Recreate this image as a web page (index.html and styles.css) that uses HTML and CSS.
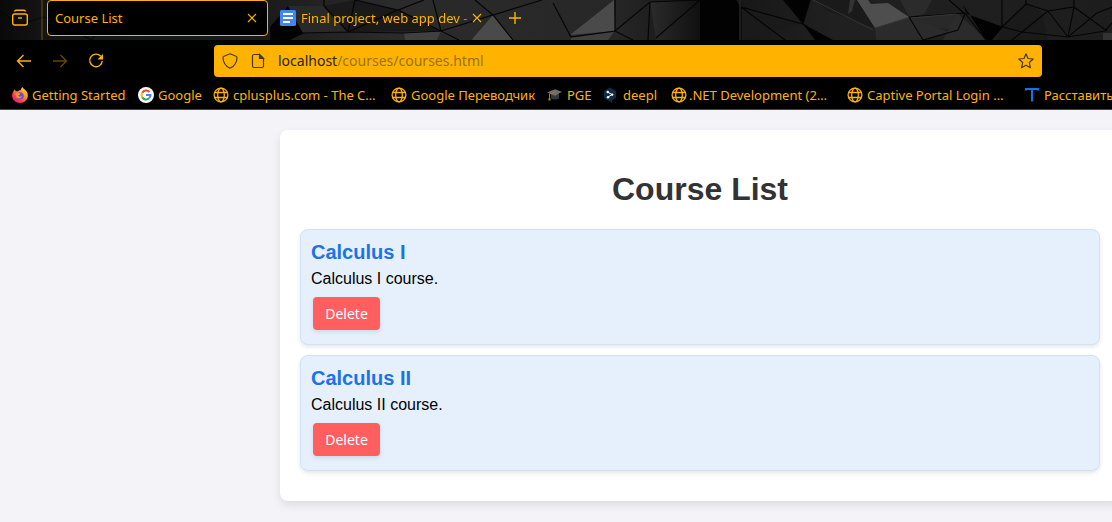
FILE: index.html
```html
<!DOCTYPE html>
<html lang="en">
<head>
<meta charset="utf-8">
<title>Course List</title>
<link rel="stylesheet" href="styles.css">
</head>
<body>
<svg class="symbols" aria-hidden="true">
  <symbol id="globe" viewBox="0 0 16 16"><g fill="none" stroke="currentColor" stroke-width="1.3"><circle cx="8" cy="8" r="6.9"/><ellipse cx="8" cy="8" rx="3.3" ry="6.9"/><path d="M1.5 5.5h13M1.5 10.5h13"/></g></symbol>
  <symbol id="cross" viewBox="0 0 10 10"><path d="M1 1l8 8M9 1l-8 8" stroke="currentColor" stroke-width="1.1" fill="none"/></symbol>
</svg>
<header class="browser">
  <div class="tabs">
    <svg class="texture" viewBox="0 0 1112 40" preserveAspectRatio="xMinYMin slice" aria-hidden="true">
      <defs>
        <linearGradient id="base"><stop offset="0" stop-color="#090909"/><stop offset=".04" stop-color="#151515"/><stop offset=".24" stop-color="#1b1b1b"/><stop offset=".35" stop-color="#2b2b2b"/><stop offset=".55" stop-color="#272727"/><stop offset=".63" stop-color="#141414"/><stop offset=".75" stop-color="#202020"/><stop offset="1" stop-color="#1d1d1d"/></linearGradient>
        <linearGradient id="fade"><stop offset="0" stop-color="#2b2b2b"/><stop offset="1" stop-color="#101010"/></linearGradient>
      </defs>
      <path fill="url(#base)" d="M0 0h1112v40H0z"/>
      <path fill="#020202" d="M270 27l18-21 16 27-14 7h-20zM700 0h36l5 7v33h-41zM783 0h27l-7 24zM803 24l30 16h-18zM963 5l4 9 36 13-11 13h-6l-16-25z"/>
      <path fill="#292929" d="M288 6l36 0 24 26-45 1zM355 0l43 10-49 22zM433 0h42l18 15-52 16zM545 0h24l-15 2 17 35zM493 15l50 25h-30zM912 17l48-4-9 16-42-2z"/>
      <path fill="#1a1a1a" d="M324 6l31-6 43 10-49 22zM398 10l43 21-92 1zM741 7l62 17-62 16zM815 0h42l18 28-50-18zM1003 27l23-24 16 10 6 27h-50z"/>
      <path fill="#2b2b2b" d="M875 28l34-11 40 15-27 8h-46zM909 17l-9-17h32l-8 14zM957 13l-14 27h44z"/>
      <path fill="url(#fade)" d="M650 2l50-2v40h-44z"/>
      <path fill="#4a4a4a" d="M473 38l20-23 20 25h-41zM570 35l44-35 1 31z"/>
      <path fill="#404040" d="M404 33l37-2-4 9h-32zM571 37l43-5-6 8h-37z"/>
      <path fill="#4e4e4e" d="M857 0l11 0 3 4 17-1 21 14-34 11z"/>
      <path fill="#333" d="M850 0h5l-3 11-4 3zM1103 33h9v7h-9z"/>
      <path fill="none" stroke="#060606" stroke-width="1.2" d="M270 40l33-7 45-1 56 1 37-2 52-16 20 25M324 0v6l24 26 50-22 43 21M348 32l7-32 43 10 26-10M441 31l-8-31M441 31l18 9M475 0l18 15 49-15M553 3l18 34 44-6 35-29 50-2M615 31V0M615 31l18 9M650 2l-2 38M700 0l-44 38M740 0l1 7 62 17 7-24M741 7l44 33M741 7v33M803 24l25 16M786 0l17 24M909 17l14 23 35-10 7-16-16-14M909 17l56-4 21 27M1002 0v27l24-23 22 7 26-4 33 24M1026 4v-4M1048 11l-26 21M1048 11l20 26 29-24 15-6M1068 37l6-30V0M1022 32l46 5 37-6 7-8M1003 27l19 5-10 8"/>
      <path fill="none" stroke="#353535" stroke-width="1" d="M875 28l34-10M813 0l60 30M740 0v40M911 18l45-4M42 0v40"/>
      <path fill="none" stroke="#070707" d="M0 10l18 15 26-8 48 23M92 40l24-40 29 31 36-31"/>
      <path d="M42 0v40" stroke="#5b4108"/>
    </svg>
    <button class="icon-button collections" aria-label="Recent browsing"><svg width="18" height="18" viewBox="0 0 18 18" fill="none" stroke="currentColor" stroke-width="1.4"><path d="M3.5 2.500q.3-1.300 1.500-1.300h8q1.200 0 1.500 1.300"/><rect x="1.700" y="5" width="14.600" height="11" rx="2"/><path d="M7 9h4"/></svg></button>
    <div class="tab tab-active"><span class="tab-title">Course List</span><button class="icon-button" aria-label="Close Course List"><svg width="10" height="10"><use href="#cross"/></svg></button></div>
    <div class="tab tab-second"><svg width="16" height="16" viewBox="0 0 16 16"><rect width="16" height="16" rx="1.500" fill="#4285f4"/><path d="M3 4h10M3 8h10M3 12h7" stroke="#fff" stroke-width="1.800"/></svg><span class="tab-title">Final project, web app dev -</span><button class="icon-button" aria-label="Close Final project"><svg width="10" height="10"><use href="#cross"/></svg></button></div>
    <button class="icon-button new-tab" aria-label="New tab"><svg width="12" height="12" viewBox="0 0 12 12"><path d="M6 0v12M0 6h12" stroke="currentColor" stroke-width="1.400"/></svg></button>
  </div>
  <nav class="toolbar" aria-label="Navigation">
    <div class="nav-buttons">
      <button class="icon-button" aria-label="Back"><svg width="16" height="16" viewBox="0 0 16 16" fill="none" stroke="currentColor" stroke-width="1.400"><path d="M15 8H2M7.500 2L1.500 8l6 6"/></svg></button>
      <button class="icon-button dim" aria-label="Forward"><svg width="16" height="16" viewBox="0 0 16 16" fill="none" stroke="currentColor" stroke-width="1.400"><path d="M1 8h13M8.500 2l6 6-6 6"/></svg></button>
      <button class="icon-button" aria-label="Reload"><svg width="16" height="16" viewBox="0 0 16 16" fill="none" stroke="currentColor" stroke-width="1.400"><path d="M12.800 3.300A6.300 6.300 0 1 0 14.300 8"/><path d="M15 1v5.500H9.500z" fill="currentColor" stroke="none"/></svg></button>
    </div>
    <div class="address">
      <svg width="16" height="16" viewBox="0 0 16 16" fill="none" stroke="currentColor" stroke-width="1.200"><path d="M8 .8l6 2.400c.8.300 1 .8 1 1.500-.2 5-3 8.700-7 10.500-4-1.800-6.800-5.500-7-10.500 0-.7.200-1.200 1-1.500z"/></svg>
      <svg width="16" height="16" viewBox="0 0 16 16" fill="none" stroke="currentColor" stroke-width="1.200"><path d="M4 1.500h5.500l4 4v7.500q0 1.500-1.500 1.500H4q-1.500 0-1.500-1.500V3q0-1.500 1.500-1.500z"/><path d="M9.500 1.500v4h4z" fill="currentColor"/></svg>
      <a class="url" href="#courses"><span class="host">localhost</span>/courses/courses.html</a>
      <button class="icon-button star" aria-label="Bookmark this page"><svg width="16" height="16" viewBox="0 0 16 16" fill="none" stroke="currentColor" stroke-width="1.200" stroke-linejoin="round"><path d="M8 .8l2 4.700 5.200.5-3.900 3.500 1.100 5.200L8 12.200l-4.400 2.500 1.100-5.200L.8 6 6 5.500z"/></svg></button>
    </div>
  </nav>
  <nav class="bookmarks" aria-label="Bookmarks">
    <a class="bookmark getting" href="#"><svg width="16" height="16" viewBox="0 0 16 16"><defs><linearGradient id="fox" x1="1" y1="0" x2=".2" y2="1"><stop offset="0" stop-color="#fff04a"/><stop offset=".4" stop-color="#ff9a22"/><stop offset=".75" stop-color="#ff3b47"/><stop offset="1" stop-color="#e31587"/></linearGradient></defs><path d="M2.300 2.200L4 4.200 6 4.300C7 3 8 3.200 8.500 3.500 8.800 2 10 .4 10.700 0c.2 2 3 2.600 4.300 5 2.600 5.400-1.200 11-7 11C1.500 16-1 10 .6 6c.5-1.500 1.300-2 1.700-3.800z" fill="url(#fox)"/><circle cx="8.200" cy="8.800" r="3.500" fill="#7542e5"/><path d="M3.500 6.500c2-1 3 0 5-.2-.2 1.500-2.500 1.500-2 2.500.6 1.500 2.500 1 3.500.2-.3 2.500-4.500 3.500-6 .5z" fill="#ff9427"/></svg>Getting Started</a>
    <a class="bookmark google" href="#"><svg width="16" height="16" viewBox="0 0 16 16" fill="none"><circle cx="8" cy="8" r="8" fill="#fff"/><g stroke-width="2"><path d="M11.400 5A4.500 4.500 0 0 0 4.200 5.700" stroke="#ea4335"/><path d="M4.200 5.700a4.500 4.500 0 0 0 0 4.700" stroke="#fbbc05"/><path d="M4.200 10.400a4.500 4.500 0 0 0 6.900.9" stroke="#34a853"/><path d="M11.100 11.300A4.500 4.500 0 0 0 12.500 8H8" stroke="#4285f4"/></g></svg>Google</a>
    <a class="bookmark cplus" href="#"><svg width="16" height="16"><use href="#globe"/></svg>cplusplus.com - The C…</a>
    <a class="bookmark translate" href="#"><svg width="16" height="16"><use href="#globe"/></svg>Google Переводчик</a>
    <a class="bookmark pge" href="#"><svg width="16" height="16" viewBox="0 0 16 16"><path d="M4 7v4.500q4 2 8 0V7z" fill="#35383a"/><path d="M0 5.500L8 2.300l7 2.500-7 4z" fill="#6b6d6e"/><path d="M8 5L2.500 6.800V12" fill="none" stroke="#a97a22"/><path d="M1.700 11h1.600l.4 2.500H1.400z" fill="#b7841d"/></svg>PGE</a>
    <a class="bookmark deepl" href="#"><svg width="16" height="16" viewBox="0 0 16 16"><path d="M7 .5l6 3.500v7l-4 2.300V16l-3-2-5-3V4z" fill="#0f2b46"/><path d="M4.500 5L9 7.600 5 10" fill="none" stroke="#fff"/><g fill="#fff"><circle cx="4.700" cy="5" r="1.200"/><circle cx="9.200" cy="7.600" r="1.200"/><circle cx="5" cy="10.200" r="1.200"/></g></svg>deepl</a>
    <a class="bookmark net" href="#"><svg width="16" height="16"><use href="#globe"/></svg>.NET Development (2…</a>
    <a class="bookmark captive" href="#"><svg width="16" height="16"><use href="#globe"/></svg>Captive Portal Login …</a>
    <a class="bookmark commas" href="#"><svg width="16" height="16" viewBox="0 0 16 16"><path d="M2 3.500V2h12v1.500M8 2v12.500" fill="none" stroke="#0877ee" stroke-width="2"/></svg>Расставить</a>
  </nav>
</header>
<main class="page">
  <section class="container" id="courses">
    <h1>Course List</h1>
    <article class="course"><h2>Calculus I</h2><p>Calculus I course.</p><button class="delete">Delete</button></article>
    <article class="course"><h2>Calculus II</h2><p>Calculus II course.</p><button class="delete">Delete</button></article>
  </section>
</main>
</body>
</html>
```
FILE: styles.css
```css
* { box-sizing: border-box; }
body { margin: 0; min-height: 100vh; background: #f4f3f8; font-family: "Liberation Sans", Arial, sans-serif; overflow-x: hidden; }
svg { display: block; flex-shrink: 0; }
.symbols { position: absolute; width: 0; height: 0; }
.browser { background: #000; color: #ffb300; font: 13px/20px "Noto Sans", sans-serif; border-bottom: 1px solid #454545; overflow: hidden; }
.icon-button { display: flex; padding: 0; border: 0; background: none; color: inherit; }
.tabs { position: relative; display: flex; align-items: center; height: 40px; padding: 0 0 4px 11px; }
.texture { position: absolute; inset: 0; width: 100%; height: 100%; }
.tabs > :not(.texture) { position: relative; }
.tabs > .texture { position: absolute; }
.tab { display: flex; align-items: center; height: 36px; }
.tab-active { width: 221px; margin-left: 18px; padding: 0 10px 0 7px; background: #000; border: 1px solid #ffb300; border-radius: 4px; }
.tab-title { flex: 1; min-width: 0; white-space: nowrap; overflow: hidden; }
.tab-second { width: 202px; margin-left: 12px; gap: 5px; }
.tab-second .tab-title { margin-right: -4px; mask-image: linear-gradient(to right, #000 92%, rgba(0, 0, 0, .4)); }
.new-tab { margin-left: 27px; }
.toolbar { display: flex; align-items: center; height: 42px; padding: 0 70px 0 16px; }
.nav-buttons { display: flex; gap: 20px; width: 198px; }
.dim { opacity: .4; }
.address { flex: 1; display: flex; align-items: center; gap: 12px; height: 32px; padding: 0 8px; border-radius: 4px; background: #ffb300; color: #473a1c; }
.url { flex: 1; color: #9b7116; font-size: 14px; text-decoration: none; }
.host { color: #252525; }
.bookmarks { display: flex; align-items: center; height: 27px; padding: 0 0 2px 12px; }
.bookmark { display: flex; flex: none; align-items: center; gap: 4px; color: inherit; text-decoration: none; white-space: nowrap; }
.getting { width: 126px; }
.google { width: 75px; }
.cplus { width: 178px; }
.translate { width: 156px; }
.pge { width: 56px; }
.deepl { width: 68px; }
.net { width: 176px; gap: 2px; }
.captive { width: 177px; }
.page { padding: 20px 0 20px 280px; overflow: hidden; }
.container { margin-right: -8px; padding: 20px; background: #fff; border-radius: 8px; box-shadow: 0 4px 8px rgba(0, 0, 0, .1); }
h1 { margin: 21px 0; color: #333; font-size: 32px; line-height: 37px; text-align: center; }
.course { margin-bottom: 10px; padding: 10px 10px 14px; background: #e6f0fc; border: 1px solid #d0e2f4; border-radius: 8px; box-shadow: 0 2px 4px rgba(0, 0, 0, .1); }
.course h2 { margin: 0 0 5px; color: #1a73e8; font-size: 20px; line-height: 24px; }
.course p { margin: 0 0 8px; font-size: 16px; line-height: 20px; }
.delete { display: block; min-width: 67px; margin-left: 2px; padding: 6px 12px; border: 0; border-radius: 4px; background: #ff5f5f; color: #fff; font: 14px/21px "Noto Sans", sans-serif; box-shadow: 0 2px 4px rgba(0, 0, 0, .1); }
```
